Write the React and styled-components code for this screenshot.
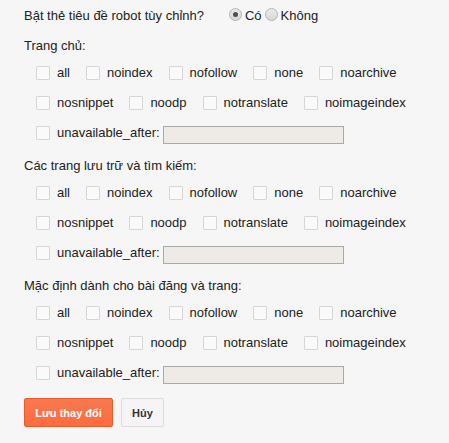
import React from 'react';
import styled, { createGlobalStyle } from 'styled-components';

const GlobalStyle = createGlobalStyle`
  html, body {
    margin: 0;
    padding: 0;
    background: #f6f6f6;
  }
  body {
    font-family: 'Liberation Sans', Arial, sans-serif;
    font-size: 13px;
    color: #222;
  }
`;

const Page = styled.div`
  padding: 8px 24px 0 24px;
  width: 449px;
  height: 443px;
  box-sizing: border-box;
`;

const TitleRow = styled.div`
  display: flex;
  align-items: center;
  height: 16px;
  line-height: 16px;
  margin-bottom: 14px;
`;

const TitleText = styled.span`
  margin-right: 25px;
`;

const Radio = styled.span`
  display: inline-block;
  box-sizing: border-box;
  width: 13px;
  height: 13px;
  border-radius: 50%;
  border: 1px solid #b5b5b5;
  background: linear-gradient(#eaeaea, #d8d8d8);
  position: relative;
  margin-right: 3px;
  margin-top: -3px;
  &::after {
    content: '';
    display: ${({ $checked }) => ($checked ? 'block' : 'none')};
    position: absolute;
    left: 3px;
    top: 3px;
    width: 5px;
    height: 5px;
    border-radius: 50%;
    background: #4d4d4d;
  }
`;

const RadioLabel = styled.span`
  margin-right: 3px;
`;

const Section = styled.section`
  margin-bottom: 10px;
`;

const SectionTitle = styled.div`
  line-height: 16px;
  margin-bottom: 4px;
`;

const Row = styled.div`
  display: flex;
  align-items: center;
  height: 30px;
  padding-left: 12px;
`;

const Item = styled.label`
  display: flex;
  align-items: center;
  margin-right: ${({ $tight }) => ($tight ? '3px' : '16px')};
  line-height: 16px;
`;

const Box = styled.span`
  display: inline-block;
  box-sizing: border-box;
  width: 14px;
  height: 14px;
  border: 1px solid #d6d6d6;
  border-radius: 1px;
  background: #fafafa;
  margin-right: 7px;
`;

const DateInput = styled.span`
  display: inline-block;
  box-sizing: border-box;
  width: 181px;
  height: 18px;
  margin-top: 3px;
  border: 1px solid #a9a9a9;
  background: #eeebe6;
`;

const Actions = styled.div`
  display: flex;
  gap: 8px;
`;

const Button = styled.button`
  box-sizing: border-box;
  height: 29px;
  padding: 0 10px;
  font-family: 'Liberation Sans', Arial, sans-serif;
  font-size: 11px;
  font-weight: bold;
  border-radius: 2px;
  border: 1px solid ${({ $primary }) => ($primary ? '#ec5a2a' : '#dcdcdc')};
  background: ${({ $primary }) =>
    $primary ? 'linear-gradient(#f67a52, #ff6b3d)' : '#f6f4f6'};
  color: ${({ $primary }) => ($primary ? '#fff' : '#333')};
  width: ${({ $primary }) => ($primary ? '89px' : '43px')};
`;

const rows = [
  ['all', 'noindex', 'nofollow', 'none', 'noarchive'],
  ['nosnippet', 'noodp', 'notranslate', 'noimageindex'],
];

const sections = [
  'Trang chủ:',
  'Các trang lưu trữ và tìm kiếm:',
  'Mặc định dành cho bài đăng và trang:',
];

function RobotSection({ title }) {
  return (
    <Section>
      <SectionTitle>{title}</SectionTitle>
      {rows.map((row, i) => (
        <Row key={i}>
          {row.map((name) => (
            <Item key={name}>
              <Box />
              {name}
            </Item>
          ))}
        </Row>
      ))}
      <Row>
        <Item $tight>
          <Box />
          unavailable_after:
        </Item>
        <DateInput />
      </Row>
    </Section>
  );
}

export default function App() {
  return (
    <Page>
      <GlobalStyle />
      <TitleRow>
        <TitleText>Bật thẻ tiêu đề robot tùy chỉnh?</TitleText>
        <Radio $checked />
        <RadioLabel>Có</RadioLabel>
        <Radio />
        <RadioLabel>Không</RadioLabel>
      </TitleRow>
      {sections.map((title) => (
        <RobotSection key={title} title={title} />
      ))}
      <Actions>
        <Button $primary>Lưu thay đổi</Button>
        <Button>Hủy</Button>
      </Actions>
    </Page>
  );
}
